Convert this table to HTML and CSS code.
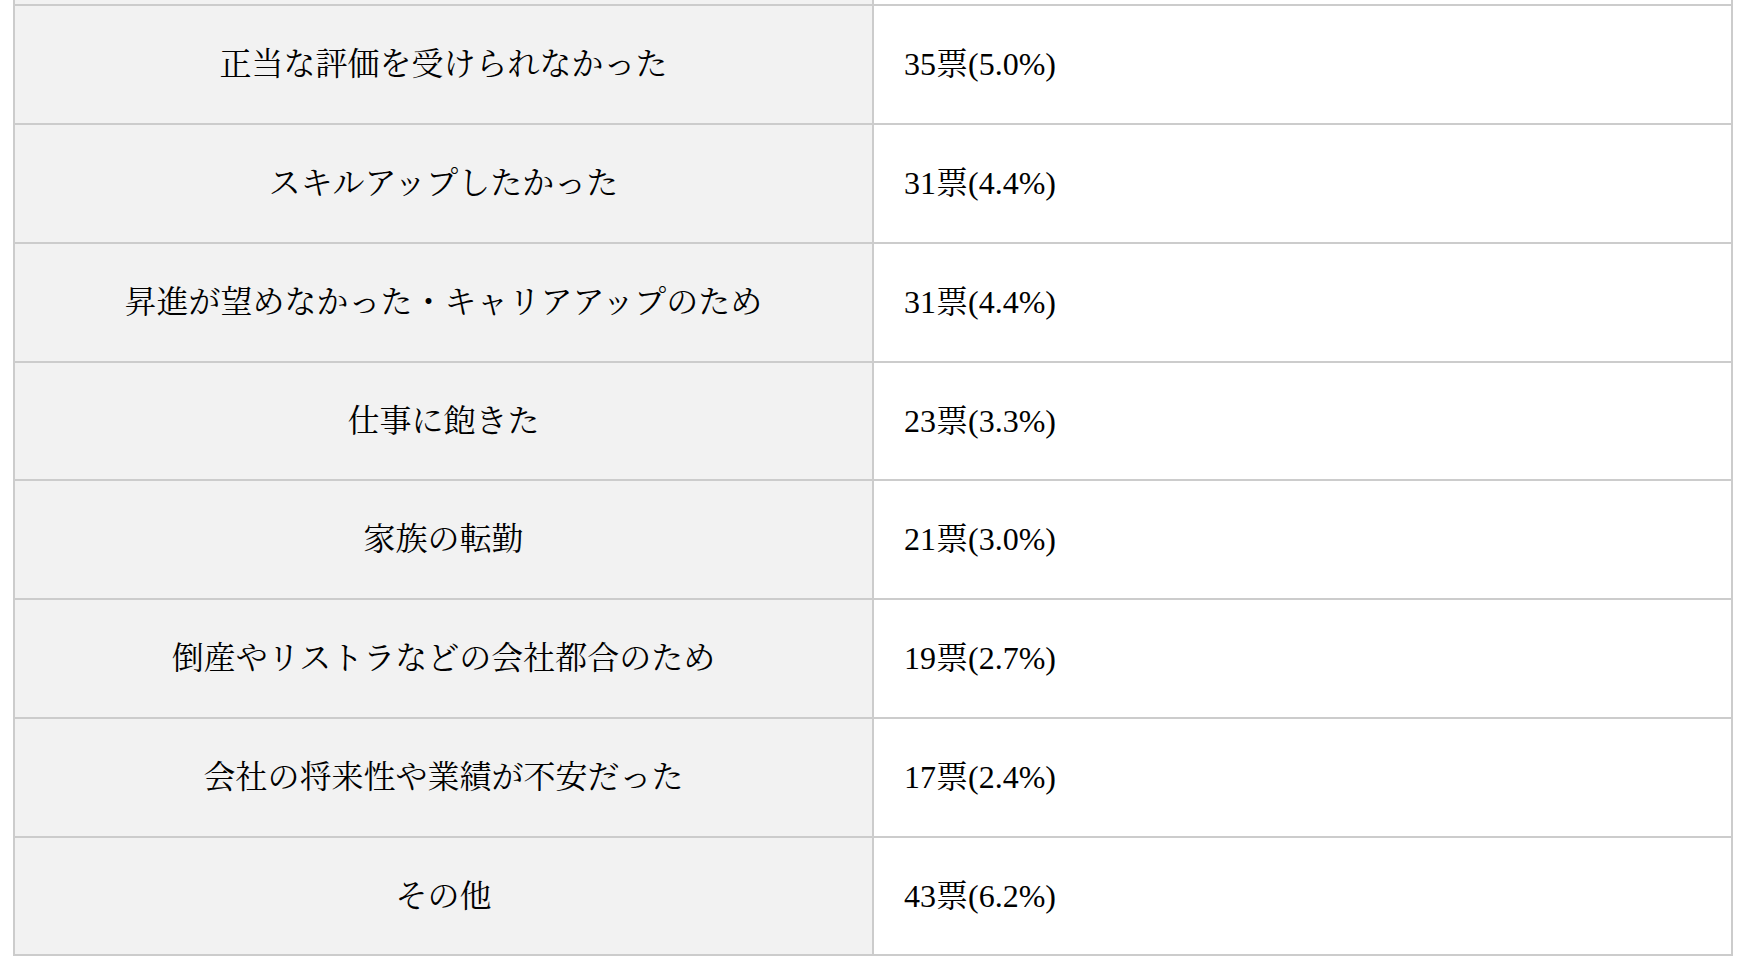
FILE: index.html
```html
<!DOCTYPE html>
<html lang="ja">

<head>
  <meta charset="UTF-8">
  <meta name="viewport" content="width=device-width, initial-scale=1.0">
  <title>退職理由アンケート</title>
  <link rel="stylesheet" href="styles.css">
</head>

<body>
  <table class="vote-table">
    <tbody>
      <tr class="cut">
        <td class="reason"></td>
        <td class="count"></td>
      </tr>
      <tr>
        <td class="reason">正当な評価を受けられなかった</td>
        <td class="count">35票(5.0%)</td>
      </tr>
      <tr>
        <td class="reason">スキルアップしたかった</td>
        <td class="count">31票(4.4%)</td>
      </tr>
      <tr>
        <td class="reason">昇進が望めなかった・キャリアアップのため</td>
        <td class="count">31票(4.4%)</td>
      </tr>
      <tr class="short">
        <td class="reason">仕事に飽きた</td>
        <td class="count">23票(3.3%)</td>
      </tr>
      <tr>
        <td class="reason">家族の転勤</td>
        <td class="count">21票(3.0%)</td>
      </tr>
      <tr>
        <td class="reason">倒産やリストラなどの会社都合のため</td>
        <td class="count">19票(2.7%)</td>
      </tr>
      <tr>
        <td class="reason">会社の将来性や業績が不安だった</td>
        <td class="count">17票(2.4%)</td>
      </tr>
      <tr class="short">
        <td class="reason">その他</td>
        <td class="count">43票(6.2%)</td>
      </tr>
    </tbody>
  </table>
</body>

</html>
```

FILE: styles.css
```css
body {
  margin: 0;
  padding: 0 11px 0 13px;
  background-color: #fff;
  color: #000;
  font-family: "Liberation Serif", "Noto Serif CJK JP", "Noto Sans CJK JP", serif;
  font-size: 32px;
}
.vote-table {
  width: 1720px;
  border-collapse: separate;
  border-spacing: 0;
  table-layout: fixed;
}
.vote-table td {
  box-sizing: border-box;
  height: 119px;
  padding: 0 30px;
  border-right: 2px solid #ccc;
  border-bottom: 2px solid #ccc;
  vertical-align: middle;
  line-height: 1.2;
}
.vote-table .short td {
  height: 118px;
}
.vote-table .cut td {
  height: 6px;
  padding: 0;
}
.reason {
  width: 861px;
  border-left: 2px solid #ccc;
  background-color: #f2f2f2;
  text-align: center;
}
.count {
  background-color: #fff;
  text-align: left;
}
```
